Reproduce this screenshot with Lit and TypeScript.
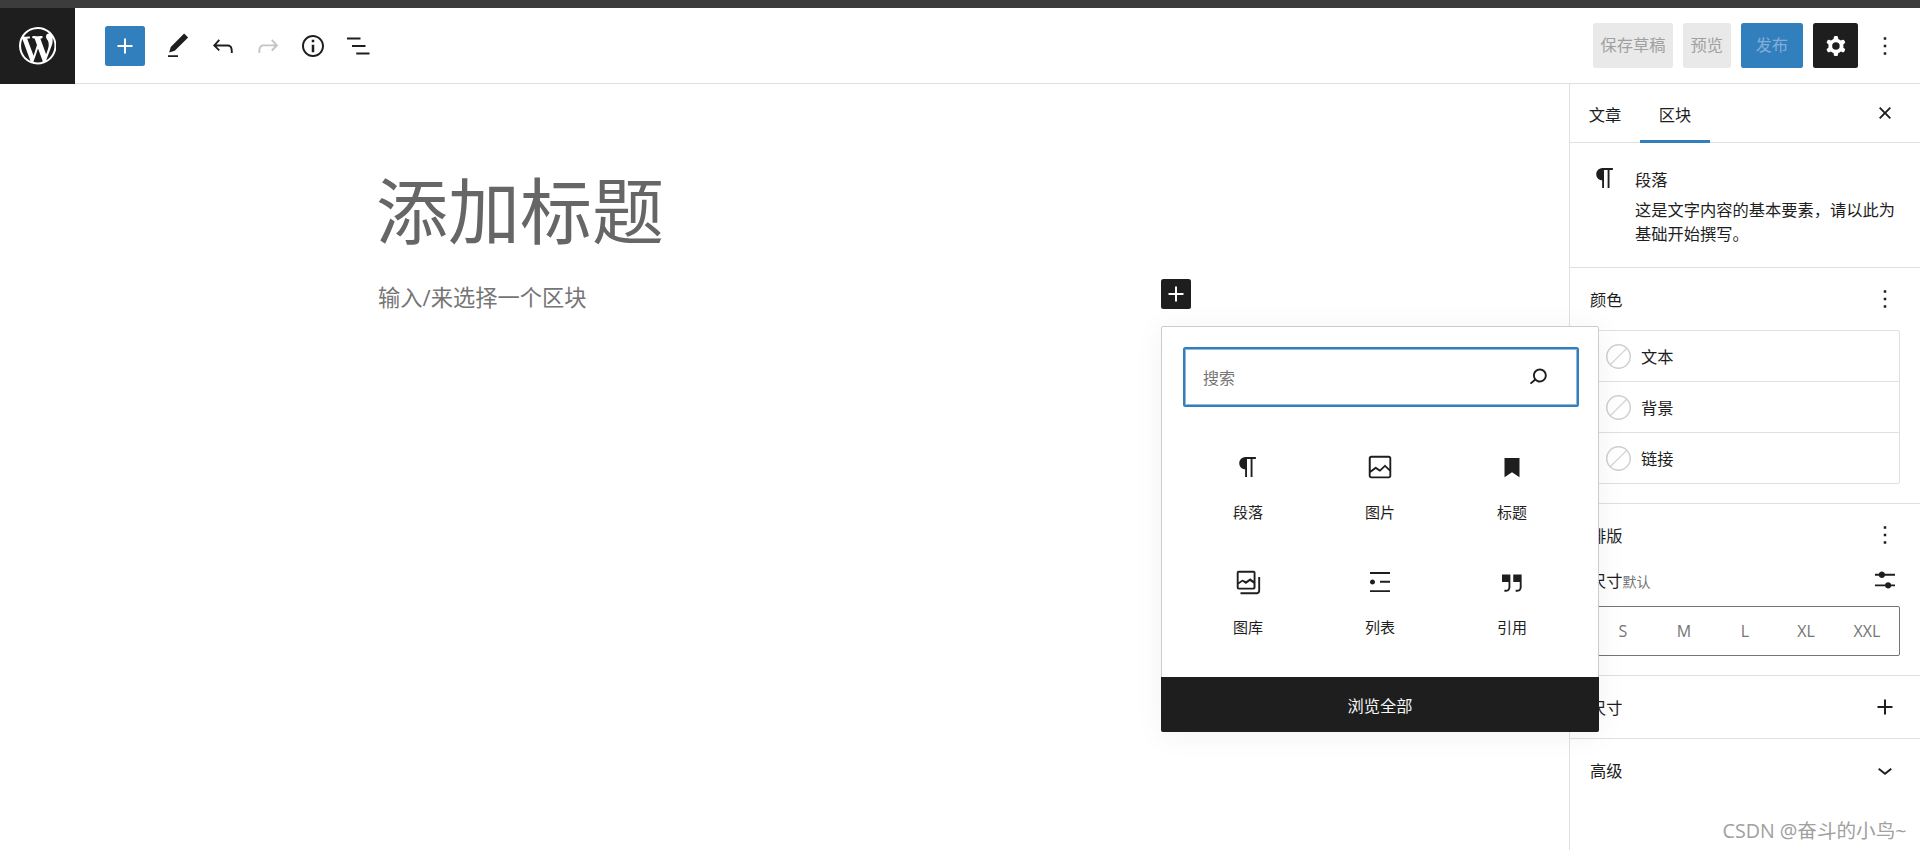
import { LitElement, html, css, svg } from "lit";
import { customElement } from "lit/decorators.js";

const P = {
  plus: "M18 11.2h-5.2V6h-1.6v5.2H6v1.6h5.2V18h1.6v-5.2H18z",
  tools: "M20.1 5.1L16.9 2 6.2 12.7l-1.3 4.4 4.5-1.3L20.1 5.1zM4 20.8h8v-1.5H4v1.5z",
  undo: "M18.3 11.7c-.6-.6-1.4-.9-2.3-.9H6.7l2.9-3.3-1.1-1-4.5 5L8.5 16l1-1-2.7-2.7H16c.5 0 .9.2 1.3.5 1 1 1 3.4 1 4.5v.3h1.5v-.2c0-1.5 0-4.3-1.5-5.7z",
  redo: "M15.6 6.5l-1.1 1 2.9 3.3H8c-.9 0-1.7.3-2.3.9-1.4 1.5-1.4 4.2-1.4 5.6v.2h1.5v-.3c0-1.1 0-3.5 1-4.5.3-.3.7-.5 1.3-.5h9.2L14.5 15l1.1 1.1 4.6-4.6-4.6-5z",
  info: "M12 3.2c-4.8 0-8.8 3.9-8.8 8.8 0 4.8 3.9 8.8 8.8 8.8 4.8 0 8.8-3.9 8.8-8.8 0-4.8-4-8.8-8.8-8.8zm0 16c-4 0-7.2-3.3-7.2-7.2C4.8 8 8 4.8 12 4.8s7.2 3.3 7.2 7.2c0 4-3.2 7.2-7.2 7.2zM11 17h2v-6h-2v6zm0-8h2V7h-2v2z",
  listView: "M3.2 5.2h10.8v1.5H3.2zM7.2 11.2h10.8v1.5H7.2zM10.6 17.2h10.6v1.5H10.6z",
  cog: "M10.289 4.836A1 1 0 0111.275 4h1.306a1 1 0 01.987.836l.244 1.466c.787.26 1.503.679 2.108 1.218l1.393-.522a1 1 0 011.216.437l.653 1.13a1 1 0 01-.23 1.273l-1.148.944a6.025 6.025 0 010 2.435l1.149.946a1 1 0 01.23 1.272l-.653 1.13a1 1 0 01-1.216.437l-1.394-.522c-.605.54-1.32.958-2.108 1.218l-.244 1.466a1 1 0 01-.987.836h-1.306a1 1 0 01-.986-.836l-.244-1.466a5.995 5.995 0 01-2.108-1.218l-1.394.522a1 1 0 01-1.217-.436l-.653-1.131a1 1 0 01.23-1.272l1.149-.946a6.026 6.026 0 010-2.435l-1.148-.944a1 1 0 01-.23-1.272l.653-1.131a1 1 0 011.217-.437l1.393.522a5.994 5.994 0 012.108-1.218l.244-1.466zM14.929 12a3 3 0 11-6 0 3 3 0 016 0z",
  more: "M13 19h-2v-2h2v2zm0-6h-2v-2h2v2zm0-6h-2V5h2v2z",
  close: "M12 13.06l3.712 3.713 1.061-1.06L13.061 12l3.712-3.712-1.06-1.06L12 10.938 8.288 7.227l-1.061 1.06L10.939 12l-3.712 3.712 1.06 1.061L12 13.061z",
  paragraph: "M18.3 4H9.9v-.1l-.9.2c-2.3.4-4 2.4-4 4.8s1.7 4.4 4 4.8l.7.1V20h1.5V5.5h2.9V20h1.5V5.5h2.7V4z",
  image: "M19 3H5c-1.1 0-2 .9-2 2v14c0 1.1.9 2 2 2h14c1.1 0 2-.9 2-2V5c0-1.1-.9-2-2-2zM5 4.5h14c.3 0 .5.2.5.5v8.4l-3-2.9c-.3-.3-.8-.3-1 0L11.9 14 9 12c-.3-.2-.6-.2-.8 0l-3.6 2.6V5c-.1-.3.1-.5.4-.5zm14 15H5c-.3 0-.5-.2-.5-.5v-2.4l4.1-3 3 1.9c.3.2.7.2.9-.1L16 12l3.5 3.4V19c0 .3-.2.5-.5.5z",
  bookmark: "M6 4.8v15.4l6-4 6 4V4.8z",
  gallery: "M20.2 8v11c0 .7-.6 1.2-1.2 1.2H6v1.5h13c1.5 0 2.7-1.2 2.7-2.8V8zM18 16.4V4.6c0-.9-.7-1.6-1.6-1.6H4.6C3.7 3 3 3.7 3 4.6v11.8c0 .9.7 1.6 1.6 1.6h11.8c.9 0 1.6-.7 1.6-1.6zM4.5 4.6c0-.1.1-.1.1-.1h11.8c.1 0 .1.1.1.1V11l-2.3-1.7c-.3-.2-.6-.2-.9 0l-2.9 2.1L8 10.3c-.3-.2-.7-.2-.9 0l-2.6 1.9V4.6zm.1 11.9c-.1 0-.1-.1-.1-.1v-2.6l3.1-2.2 2.4 1.7c.3.1.6.1.8-.1l2.8-2 2.8 2v3.2c0 .1-.1.1-.1.1H4.6z",
  list: "M4 4v1.5h16V4H4zm8 8.5h8V11h-8v1.5zM4 20h16v-1.5H4V20zm4-8c0-1.1-.9-2-2-2s-2 .9-2 2 .9 2 2 2 2-.9 2-2z",
  quote: "M13 6v6h5.2v4c0 .8-.2 1.4-.5 1.7-.6.6-1.6.6-2.5.5h-.3v1.5h.5c1 0 2.3-.1 3.3-1 .6-.6 1-1.6 1-2.8V6H13zm-9 6h5.2v4c0 .8-.2 1.4-.5 1.7-.6.6-1.6.6-2.5.5h-.3v1.5h.5c1 0 2.3-.1 3.3-1 .6-.6 1-1.6 1-2.8V6H4v6z",
  search: "M13.5 6C10.5 6 8 8.5 8 11.5c0 1.1.3 2.1.9 3l-3.4 3 1 1.1 3.4-2.9c1 .9 2.2 1.4 3.6 1.4 3 0 5.5-2.5 5.5-5.5C19 8.5 16.5 6 13.5 6zm0 9.5c-2.2 0-4-1.8-4-4s1.8-4 4-4 4 1.8 4 4-1.8 4-4 4z",
  settings: "M14.5 13.8c-1.1 0-2.1.7-2.4 1.8H4V17h8.1c.3 1 1.3 1.8 2.4 1.8s2.1-.7 2.4-1.8H20v-1.5h-3.1c-.3-1-1.3-1.7-2.4-1.7zM11.9 7c-.3-1-1.3-1.8-2.4-1.8S7.4 6 7.1 7H4v1.5h3.1c.3 1 1.3 1.8 2.4 1.8s2.1-.7 2.4-1.8H20V7h-8.1z",
  chevron: "M17.5 11.6L12 16l-5.5-4.4.9-1.2L12 14l4.5-3.6 1 1.2z",
};
const WP = "M20 10c0-5.51-4.49-10-10-10C4.48 0 0 4.49 0 10c0 5.52 4.48 10 10 10 5.51 0 10-4.48 10-10zM7.78 15.37L4.37 6.22c.55-.02 1.17-.08 1.17-.08.5-.06.44-1.13-.06-1.11 0 0-1.45.11-2.37.11-.18 0-.37 0-.58-.01C4.12 2.69 6.87 1.11 10 1.11c2.33 0 4.45.87 6.05 2.34-.68-.11-1.65.39-1.65 1.58 0 .74.45 1.36.9 2.1.35.61.55 1.36.55 2.46 0 1.49-1.4 5-1.4 5l-3.03-8.37c.54-.02.82-.17.82-.17.5-.05.44-1.25-.06-1.22 0 0-1.44.12-2.38.12-.87 0-2.33-.12-2.33-.12-.5-.03-.56 1.2-.06 1.22l.92.08 1.26 3.41zM17.41 10c.24-.64.74-1.87.43-4.25.7 1.29 1.05 2.71 1.05 4.25 0 3.29-1.73 6.24-4.4 7.78.97-2.59 1.94-5.2 2.92-7.78zM6.1 18.09C3.12 16.65 1.11 13.53 1.11 10c0-1.3.23-2.48.72-3.59C3.25 10.3 4.67 14.2 6.1 18.09zm4.03-6.63l2.58 6.98c-.86.29-1.76.45-2.71.45-.79 0-1.57-.11-2.29-.33.81-2.38 1.62-4.74 2.42-7.1z";

const ic = (d: string) =>
  html`<svg class="i" viewBox="0 0 24 24" fill="currentColor" fill-rule="evenodd">${svg`<path d=${d}></path>`}</svg>`;

const swatch = html`<svg class="sw" viewBox="0 0 25 25" fill="none" stroke="#cfcfcf">
  <circle cx="12.5" cy="12.5" r="11.75" stroke-width="1.5"></circle>
  <path d="M4.3 20.7L20.7 4.3" stroke-width="1.2"></path>
</svg>`;

const BLOCKS: [string, string][] = [
  ["paragraph", "段落"], ["image", "图片"], ["bookmark", "标题"],
  ["gallery", "图库"], ["list", "列表"], ["quote", "引用"],
];

@customElement("app-root")
export class AppRoot extends LitElement {
  static styles = css`
    :host {
      display: block; position: relative; width: 1920px; height: 850px; overflow: hidden;
      background: #fff; color: #1e1e1e;
      font-family: "Open Sans", "Noto Sans CJK SC", sans-serif; font-size: 16.25px;
    }
    * { box-sizing: border-box; }
    .i { width: 30px; height: 30px; display: block; flex: none; }
    .adminbar { height: 8px; background: #3c3c3c; }
    .header { height: 76px; display: flex; align-items: center; border-bottom: 1px solid #e0e0e0; }
    .logo { width: 75px; height: 76px; background: #1e1e1e; color: #fff; display: flex; align-items: center; justify-content: center; margin-bottom: -1px; align-self: flex-start; }
    .logo svg { width: 37.5px; height: 37.5px; }
    .tools { display: flex; align-items: center; gap: 15px; margin-left: 30px; }
    .addbtn { width: 40px; height: 40px; border-radius: 2.5px; background: #327fbe; color: #fff; display: flex; align-items: center; justify-content: center; margin-right: 3px; }
    .redo { color: #c4c4c4; }
    .actions { margin-left: auto; padding-right: 20px; display: flex; align-items: center; gap: 10px; }
    .btn { height: 45px; border-radius: 2.5px; display: flex; align-items: center; justify-content: center; line-height: 1; }
    .save { padding: 0 7.5px; background: #e9e9e9; color: #a0a0a0; }
    .publish { padding: 0 15px; background: #327fbe; color: #82aed6; }
    .gear { width: 45px; background: #1e1e1e; color: #fff; }
    .dots { margin-left: 2px; }

    .main { display: flex; height: 766px; }
    .editor { flex: 1; min-width: 0; }
    .column { width: 811px; margin: 0 auto; padding-top: 81px; }
    .title { font-size: 72px; line-height: 90px; color: #666; margin-left: -3px; }
    .row { display: flex; justify-content: space-between; align-items: flex-start; margin-top: 24px; }
    .placeholder { font-size: 22.25px; line-height: 38px; color: #757575; margin-left: -1px; }
    .inserter { width: 30px; height: 30px; border-radius: 2.5px; background: #1e1e1e; color: #fff; margin-right: -1px; }

    .sidebar { width: 351px; flex: none; border-left: 1px solid #e0e0e0; }
    .tabs { height: 59px; display: flex; border-bottom: 1px solid #e0e0e0; }
    .tab { width: 70px; height: 59px; display: flex; align-items: center; justify-content: center; }
    .tab.active { border-bottom: 3px solid #327fbe; padding-top: 3px; }
    .tabclose { margin-left: auto; margin-right: 20px; margin-top: 14px; }

    .card { height: 125px; padding: 20px 20px 0; display: flex; border-bottom: 1px solid #e0e0e0; }
    .cardtext { margin-left: 15px; }
    .cardtitle { line-height: 23px; margin-top: 6px; }
    .carddesc { line-height: 23.5px; margin-top: 7px; }

    .panel { padding: 16px 20px 19px; border-bottom: 1px solid #e0e0e0; }
    .panel.closed { padding-bottom: 16px; }
    .panel.last { border-bottom: 0; }
    .phead { height: 30px; display: flex; align-items: center; justify-content: space-between; }
    .colors { margin-top: 16px; border: 1px solid #e0e0e0; border-radius: 2px; }
    .color { height: 51px; display: flex; align-items: center; padding-left: 15px; gap: 10px; border-bottom: 1px solid #e0e0e0; }
    .color:last-child { border-bottom: 0; height: 50px; }
    .sw { width: 25px; height: 25px; flex: none; }
    .sizerow { margin-top: 15px; height: 30px; display: flex; align-items: center; justify-content: space-between; }
    .muted { color: #757575; font-size: 14px; }
    .sizes { margin-top: 11px; height: 50px; border: 1px solid #757575; border-radius: 2px; display: flex; align-items: center; padding: 0 1.5px; color: #757575; font-size: 16px; }
    .sizes span { flex: 1; text-align: center; }

    .popover { position: absolute; left: 1161px; top: 326px; width: 438px; height: 406px; background: #fff; border: 1px solid #ccc; border-radius: 2px; box-shadow: 0 3px 30px rgba(25, 30, 35, 0.06); display: flex; flex-direction: column; }
    .search { margin: 20px 19px 0 21px; height: 60px; border: 2px solid #327fbe; box-shadow: inset 0 0 0 1px rgba(50, 127, 190, 0.55); border-radius: 2.5px; display: flex; align-items: center; justify-content: space-between; padding: 0 24px 0 18px; }
    .search .ph { color: #757575; font-size: 16px; }
    .search .i { margin-top: -3px; }
    .grid { margin: 27px 20px 0 20px; display: grid; grid-template-columns: repeat(3, 1fr); }
    .item { height: 115px; padding-top: 18px; display: flex; flex-direction: column; align-items: center; }
    .item span { margin-top: 21px; font-size: 15px; line-height: 19px; }
    .footer { margin: auto -1px -1px; height: 55px; background: #1e1e1e; color: #f5f5f5; border-radius: 0 0 2px 2px; display: flex; align-items: center; justify-content: center; padding-top: 1px; }
    .mark { position: absolute; right: 13.5px; bottom: 6px; font-size: 19.6px; line-height: 26px; color: #a0a0a0; white-space: nowrap; }
  `;

  render() {
    return html`
      <div class="adminbar"></div>
      <header class="header">
        <div class="logo"><svg viewBox="0 0 20 20" fill="currentColor"><path d=${WP}></path></svg></div>
        <div class="tools">
          <div class="addbtn">${ic(P.plus)}</div>
          ${ic(P.tools)}${ic(P.undo)}<span class="redo">${ic(P.redo)}</span>${ic(P.info)}${ic(P.listView)}
        </div>
        <div class="actions">
          <div class="btn save">保存草稿</div>
          <div class="btn save">预览</div>
          <div class="btn publish">发布</div>
          <div class="btn gear">${ic(P.cog)}</div>
          <span class="dots">${ic(P.more)}</span>
        </div>
      </header>
      <div class="main">
        <div class="editor">
          <div class="column">
            <div class="title">添加标题</div>
            <div class="row">
              <div class="placeholder">输入/来选择一个区块</div>
              <div class="inserter">${ic(P.plus)}</div>
            </div>
          </div>
        </div>
        <aside class="sidebar">
          <div class="tabs">
            <div class="tab">文章</div>
            <div class="tab active">区块</div>
            <span class="tabclose">${ic(P.close)}</span>
          </div>
          <div class="card">
            ${ic(P.paragraph)}
            <div class="cardtext">
              <div class="cardtitle">段落</div>
              <div class="carddesc">这是文字内容的基本要素，请以此为<br />基础开始撰写。</div>
            </div>
          </div>
          <section class="panel">
            <div class="phead"><span>颜色</span>${ic(P.more)}</div>
            <div class="colors">
              ${["文本", "背景", "链接"].map((t) => html`<div class="color">${swatch}<span>${t}</span></div>`)}
            </div>
          </section>
          <section class="panel">
            <div class="phead"><span>排版</span>${ic(P.more)}</div>
            <div class="sizerow"><span>尺寸<span class="muted">默认</span></span>${ic(P.settings)}</div>
            <div class="sizes">${["S", "M", "L", "XL", "XXL"].map((s) => html`<span>${s}</span>`)}</div>
          </section>
          <section class="panel closed">
            <div class="phead"><span>尺寸</span>${ic(P.plus)}</div>
          </section>
          <section class="panel closed last">
            <div class="phead"><span>高级</span>${ic(P.chevron)}</div>
          </section>
        </aside>
      </div>
      <div class="popover">
        <div class="search"><span class="ph">搜索</span>${ic(P.search)}</div>
        <div class="grid">
          ${BLOCKS.map(([k, t]) => html`<div class="item">${ic((P as any)[k])}<span>${t}</span></div>`)}
        </div>
        <div class="footer">浏览全部</div>
      </div>
      <div class="mark">CSDN @奋斗的小鸟~</div>
    `;
  }
}
